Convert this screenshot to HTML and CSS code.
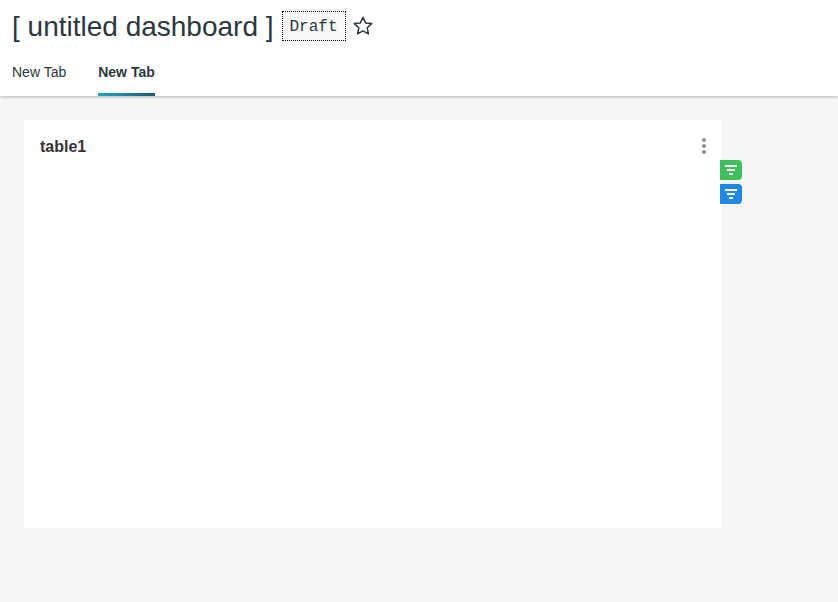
FILE: index.html
```html
<!DOCTYPE html>
<html lang="en">
<head>
    <meta charset="UTF-8">
    <meta name="viewport" content="width=device-width, initial-scale=1.0">
    <title>[ untitled dashboard ]</title>
    <link rel="stylesheet" href="styles.css">
</head>
<body>
    <header class="header">
        <div class="title-row">
            <h1 class="title">[ untitled dashboard ]</h1>
            <span class="draft">Draft</span>
            <svg class="star" width="22" height="22" viewBox="0 0 22 22">
                <path d="M11 2.3l2.6 5.6 6.1.7-4.5 4.2 1.2 6.1-5.4-3-5.4 3 1.2-6.1-4.5-4.2 6.1-.7z" fill="none" stroke="#2b373e" stroke-width="1.5" stroke-linejoin="round"/>
            </svg>
        </div>
        <nav class="tabs">
            <div class="tab">New Tab</div>
            <div class="tab active">New Tab</div>
        </nav>
    </header>

    <main class="content">
        <section class="chart-card">
            <div class="card-head">
                <h2 class="card-title">table1</h2>
                <div class="menu-dots">
                    <span></span>
                    <span></span>
                    <span></span>
                </div>
            </div>
            <div class="filter-tags">
                <div class="filter-tag green">
                    <svg width="12" height="10" viewBox="0 0 12 10"><path d="M0 0h12v2H0zM2 4h8v2H2zM4 8h4v2H4z" fill="#fff"/></svg>
                </div>
                <div class="filter-tag blue">
                    <svg width="12" height="10" viewBox="0 0 12 10"><path d="M0 0h12v2H0zM2 4h8v2H2zM4 8h4v2H4z" fill="#fff"/></svg>
                </div>
            </div>
        </section>
    </main>
</body>
</html>
```

FILE: styles.css
```css
* {
    box-sizing: border-box;
}

body {
    margin: 0;
    min-height: 100vh;
    font-family: "Liberation Sans", Arial, sans-serif;
    background-color: #f5f5f5;
    color: #2b373e;
}

.header {
    height: 96px;
    padding: 11px 12px 0;
    background-color: #fff;
    box-shadow: 0 1px 3px rgba(0, 0, 0, 0.25);
}

.title-row {
    display: flex;
    align-items: center;
    height: 30px;
}

.title {
    margin: 0;
    padding-top: 2px;
    font-size: 28px;
    font-weight: 400;
    line-height: 32px;
    white-space: nowrap;
}

.draft {
    display: flex;
    align-items: center;
    justify-content: center;
    width: 64px;
    height: 30px;
    margin-left: 8px;
    padding-top: 2px;
    font-family: "Liberation Mono", monospace;
    font-size: 16px;
    background-color: #f8f8f8;
    border: 1px dotted #000;
}

.star {
    margin-left: 6px;
}

.tabs {
    display: flex;
    gap: 32px;
    margin-top: 13px;
}

.tab {
    height: 42px;
    padding-top: 10px;
    font-size: 14px;
    line-height: 16px;
    white-space: nowrap;
}

.tab.active {
    font-weight: 700;
    border-bottom: 3px solid;
    border-image: linear-gradient(to right, #20a7c9, #1a5a6e) 1;
}

.content {
    padding: 24px;
}

.chart-card {
    position: relative;
    width: 698px;
    height: 408px;
    padding: 17px 16px 16px;
    background-color: #fff;
    border-radius: 4px;
}

.card-head {
    display: flex;
    justify-content: space-between;
    align-items: center;
    height: 20px;
}

.card-title {
    margin: 0;
    font-size: 16px;
    font-weight: 700;
    line-height: 20px;
    color: #333;
}

.menu-dots {
    display: flex;
    flex-direction: column;
    gap: 2px;
    margin-top: -2px;
}

.menu-dots span {
    width: 4px;
    height: 4px;
    border-radius: 50%;
    background-color: #879399;
}

.filter-tags {
    position: absolute;
    top: 40px;
    left: 696px;
    display: flex;
    flex-direction: column;
    gap: 4px;
}

.filter-tag {
    display: flex;
    align-items: center;
    justify-content: center;
    width: 22px;
    height: 20px;
    border-radius: 0 4px 4px 0;
}

.filter-tag.green {
    background-color: #3fc05a;
}

.filter-tag.blue {
    background-color: #1f88e5;
}
```
